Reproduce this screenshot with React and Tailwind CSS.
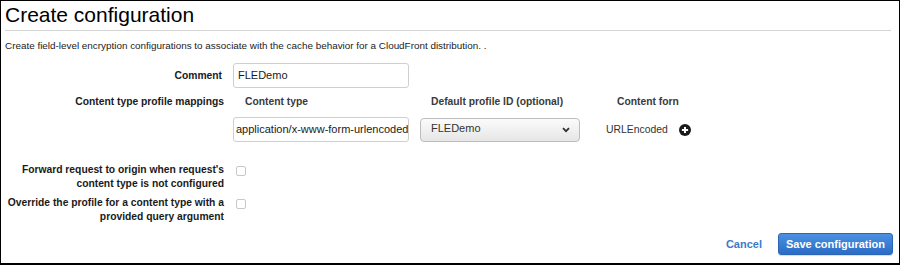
import React from "react";

const PlusCircle = () => (
    <svg width="12" height="12" viewBox="0 0 12 12">
        <circle cx="6" cy="6" r="6" fill="#1b1b1b" />
        <path d="M6 2.9v6.2M2.9 6h6.2" stroke="#fff" strokeWidth="2" />
    </svg>
);

const Chevron = () => (
    <svg width="8" height="6" viewBox="0 0 8 6">
        <path d="M1 1.2l3 3 3-3" fill="none" stroke="#333" strokeWidth="1.8" />
    </svg>
);

const Checkbox = () => (
    <span className="mt-[3px] block w-[10px] h-[10px] rounded-[2px] border border-[#c8c8c8] bg-white" />
);

const App = () => {
    return (
        <div className="w-[900px] h-[265px] border border-black border-b-2 bg-white text-[#1a1a1a] font-['Liberation_Sans',Arial,sans-serif] flex flex-col">
            {/* Header */}
            <h1 className="pl-[4px] text-[21px] leading-[28px] text-black">Create configuration</h1>
            <div className="mt-[1px] ml-[4px] mr-[8px] border-t border-[#d4d4d4]" />
            <p className="mt-[8px] pl-[4px] text-[9.9px] leading-[14px] text-[#222]">
                Create field-level encryption configurations to associate with the cache behavior for a CloudFront distribution. .
            </p>

            {/* Form */}
            <div className="mt-[10px] grid grid-cols-[223px_1fr] gap-x-[9px] items-start">
                <div className="h-[25px] pr-[2px] flex items-center justify-end text-[10.3px] font-bold">Comment</div>
                <div className="w-[176px] h-[25px] border border-[#cfcfcf] rounded-[3px] px-[4px] flex items-center text-[11px]">FLEDemo</div>

                <div className="mt-[7px] h-[14px] leading-[14px] text-right text-[10.3px] font-bold">Content type profile mappings</div>
                <div className="mt-[7px]">
                    <div className="flex h-[14px] leading-[14px] text-[10.3px] font-bold text-[#3a3a3a]">
                        <span className="w-[187px] pl-[12px]">Content type</span>
                        <span className="w-[186px] pl-[11px]">Default profile ID (optional)</span>
                        <span className="pl-[11px]">Content forn</span>
                    </div>
                    <div className="mt-[8px] flex items-center">
                        <div className="w-[176px] h-[25px] border border-[#cfcfcf] rounded-[3px] px-[2px] flex items-center text-[11px] whitespace-nowrap overflow-hidden">
                            application/x-www-form-urlencoded
                        </div>
                        <div className="ml-[11px] w-[160px] h-[24px] border border-[#bdbdbd] rounded-[4px] bg-gradient-to-b from-[#fbfbfb] to-[#e6e6e6] pl-[10px] pr-[9px] flex items-center justify-between text-[11px] text-[#333]">
                            <span className="-mt-[3px]">FLEDemo</span>
                            <Chevron />
                        </div>
                        <span className="ml-[26px] text-[10.4px] text-[#333]">URLEncoded</span>
                        <span className="ml-[11px] flex"><PlusCircle /></span>
                    </div>
                </div>

                <div className="mt-[21px] text-right text-[10.3px] leading-[14px] font-bold">
                    Forward request to origin when request's
                    <br />
                    content type is not configured
                </div>
                <div className="mt-[21px] pl-[3px]"><Checkbox /></div>

                <div className="mt-[5px] text-right text-[10.3px] leading-[14px] font-bold">
                    Override the profile for a content type with a
                    <br />
                    provided query argument
                </div>
                <div className="mt-[5px] pl-[3px]"><Checkbox /></div>
            </div>

            {/* Footer */}
            <div className="mt-[9px] mr-[6px] flex items-center justify-end">
                <button className="text-[11px] font-bold text-[#3b7bcc]">Cancel</button>
                <button className="ml-[16px] h-[22px] px-[7px] rounded-[3px] border border-[#2c66b8] bg-gradient-to-b from-[#4b91e2] to-[#2b6cc4] text-white text-[11px] font-bold shadow-[0_1px_1px_rgba(0,0,0,0.15)]">
                    Save configuration
                </button>
            </div>
        </div>
    );
};

export default App;
